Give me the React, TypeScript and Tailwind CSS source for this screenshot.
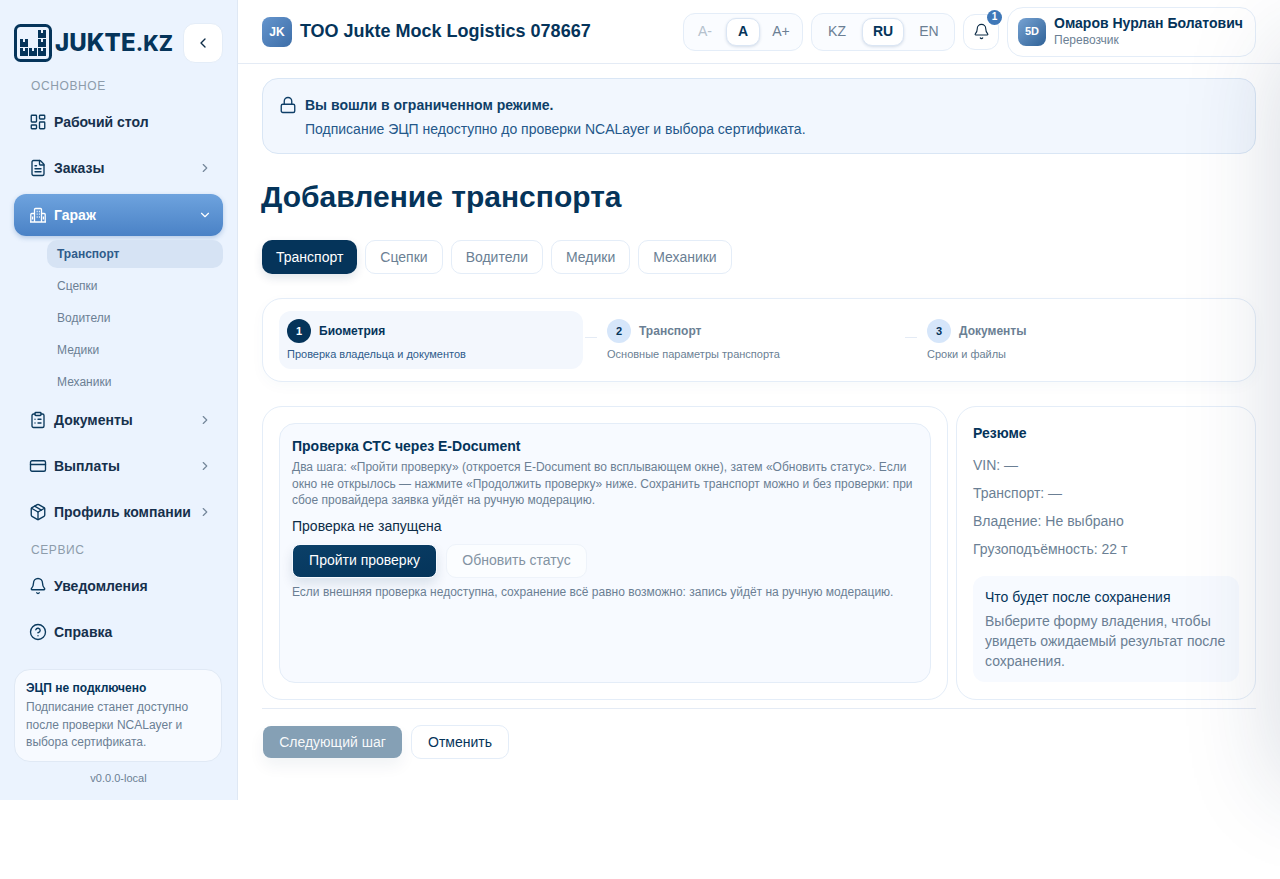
import {
  Bell,
  ChevronDown,
  ChevronLeft,
  ChevronRight,
  CircleHelp,
  ClipboardList,
  CreditCard,
  FileText,
  LayoutDashboard,
  Lock,
  Package,
} from "lucide-react";
import type { ReactNode } from "react";

const GarageIcon = () => (
  <svg width="18" height="18" viewBox="0 0 18 18" fill="none" stroke="currentColor" strokeWidth="1.3" strokeLinejoin="round">
    <path d="M5.500 16V3.500a1 1 0 0 1 1-1h5a1 1 0 0 1 1 1V16" />
    <path d="M5.500 7.500H2.800a1 1 0 0 0-1 1V16M12.500 7.500h2.700a1 1 0 0 1 1 1V16M1 16h16" />
    <path d="M7.700 5.500h.9M9.900 5.500h.9M7.700 8.200h.9M9.900 8.200h.9M7.700 11h.9M9.900 11h.9M3.600 10.500v3M14.400 10.500v3" />
  </svg>
);

// cargo boxes of the logo, each one with a notch on top
const logoBoxes = [
  [6, 15],
  [6, 24],
  [15, 24],
  [24, 24],
  [24, 15],
  [24, 6],
];

const Logo = () => (
  <svg width="38" height="38" viewBox="0 0 38 38" fill="none" className="shrink-0">
    <rect x="1.500" y="1.500" width="35" height="35" rx="5" stroke="#05345a" strokeWidth="3" />
    {logoBoxes.map(([x, y]) => (
      <path key={`${x}-${y}`} d={`M${x} ${y}h3v3h2v-3h3v8h-8z`} fill="#05345a" />
    ))}
  </svg>
);

const NavItem = ({
  icon,
  label,
  chevron,
  active,
}: {
  icon: ReactNode;
  label: string;
  chevron?: "right" | "down";
  active?: boolean;
}) => (
  <div
    className={
      active
        ? "mt-[1px] flex h-[42px] items-center gap-[7px] rounded-[12px] bg-gradient-to-b from-[#6ea3de] to-[#4a82c6] pr-[11px] pl-[14px] text-white shadow-[0_2px_5px_rgba(53,107,172,0.3)]"
        : "flex h-[42px] items-center gap-[7px] rounded-[12px] pr-[11px] pl-[14px] text-[#16304c]"
    }
  >
    <span className={active ? "flex w-[19px] justify-center text-white" : "flex w-[19px] justify-center text-[#0b3a5e]"}>{icon}</span>
    <span className="flex-1 text-[14px] font-bold">{label}</span>
    {chevron === "right" && <ChevronRight size={14} className="text-[#75879b]" />}
    {chevron === "down" && <ChevronDown size={14} className="text-white" />}
  </div>
);

const SubItem = ({ label, active }: { label: string; active?: boolean }) => (
  <div
    className={
      active
        ? "flex h-[28px] items-center rounded-[10px] bg-[#d6e3f4] pl-[10px] text-[12px] font-bold text-[#2f5c8b]"
        : "flex h-[28px] items-center pl-[10px] text-[12px] text-[#6b7f94]"
    }
  >
    {label}
  </div>
);

const Sidebar = () => (
  <aside className="flex h-[800px] w-[238px] shrink-0 flex-col border-r border-[#dfe8f4] bg-[#ebf3fe] px-[14px] pt-[23px]">
    <div className="flex h-[40px] items-center justify-between">
      <div className="flex items-center gap-[3px]">
        <Logo />
        <span className="font-['Inter',sans-serif] text-[24px] leading-none font-extrabold tracking-[0.1px] text-[#05345a]">
          JUKTE<span className="text-[21px]">.KZ</span>
        </span>
      </div>
      <button className="flex h-[40px] w-[40px] shrink-0 items-center justify-center rounded-[12px] border border-[#e4edf8] bg-white text-[#0d2c47]">
        <ChevronLeft size={16} />
      </button>
    </div>
    <div className="mt-[16px] pl-[17px] text-[12px] leading-[14px] tracking-[0.6px] text-[#8d9cab]">ОСНОВНОЕ</div>
    <nav className="mt-[8px] flex flex-col gap-[4px]">
      <NavItem icon={<LayoutDashboard size={18} strokeWidth={1.8} />} label="Рабочий стол" />
      <NavItem icon={<FileText size={18} strokeWidth={1.8} />} label="Заказы" chevron="right" />
      <NavItem icon={<GarageIcon />} label="Гараж" chevron="down" active />
      <div className="ml-[33px] -mb-[1px] flex flex-col gap-[4px]">
        <SubItem label="Транспорт" active />
        <SubItem label="Сцепки" />
        <SubItem label="Водители" />
        <SubItem label="Медики" />
        <SubItem label="Механики" />
      </div>
      <NavItem icon={<ClipboardList size={18} strokeWidth={1.8} />} label="Документы" chevron="right" />
      <NavItem icon={<CreditCard size={18} strokeWidth={1.8} />} label="Выплаты" chevron="right" />
      <NavItem icon={<Package size={18} strokeWidth={1.8} />} label="Профиль компании" chevron="right" />
    </nav>
    <div className="mt-[10px] pl-[17px] text-[12px] leading-[14px] tracking-[0.6px] text-[#8d9cab]">СЕРВИС</div>
    <div className="mt-[8px] flex flex-col gap-[4px]">
      <NavItem icon={<Bell size={18} strokeWidth={1.8} />} label="Уведомления" />
      <NavItem icon={<CircleHelp size={18} strokeWidth={1.8} />} label="Справка" />
    </div>
    <div className="mt-[16px] mr-[1px] h-[93px] rounded-[16px] border border-[#e0e9f5] bg-[#f7faff] px-[11px] pt-[10px]">
      <div className="text-[12px] leading-[16px] font-bold text-[#05345a]">ЭЦП не подключено</div>
      <div className="mt-[3px] text-[12px] leading-[17.500px] text-[#6b7f94]">
        Подписание станет доступно после проверки NCALayer и выбора сертификата.
      </div>
    </div>
    <div className="mt-[9px] text-center text-[11px] leading-[14px] text-[#6b7f94]">v0.0.0-local</div>
  </aside>
);

const Segment = ({ items, active, muted, wide }: { items: string[]; active: string; muted?: string; wide?: boolean }) => (
  <div className="flex h-[38px] items-center gap-[4px] rounded-[12px] border border-[#e4edf8] bg-[#fafcff] px-[4px]">
    {items.map((item) => {
      const width = wide ? "w-[42px]" : "w-[34px]";
      if (item === active) {
        return (
          <div
            key={item}
            className={`${width} flex h-[28px] items-center justify-center rounded-[10px] border border-[#dbe6f4] bg-white text-[14px] font-bold text-[#05345a] shadow-[0_1px_3px_rgba(40,80,130,0.18)]`}
          >
            {item}
          </div>
        );
      }
      return (
        <div
          key={item}
          className={`${width} flex h-[28px] items-center justify-center text-[14px] ${item === muted ? "text-[#b5c1cd]" : "text-[#6b7f94]"}`}
        >
          {item}
        </div>
      );
    })}
  </div>
);

const Header = () => (
  <header className="flex h-[64px] items-center justify-between border-b border-[#e4ebf5] px-[24px]">
    <div className="flex items-center gap-[8px]">
      <div className="flex h-[30px] w-[30px] items-center justify-center rounded-[8px] bg-gradient-to-br from-[#6595cd] to-[#3d6ea8] text-[12px] font-bold text-white">
        JK
      </div>
      <div className="text-[18px] font-bold text-[#05345a]">ТОО Jukte Mock Logistics 078667</div>
    </div>
    <div className="flex items-center gap-[8px]">
      <Segment items={["A-", "A", "A+"]} active="A" muted="A-" />
      <Segment items={["KZ", "RU", "EN"]} active="RU" wide />
      <div className="relative flex h-[36px] w-[36px] items-center justify-center rounded-[12px] border border-[#e4edf8] bg-white text-[#0d2c47]">
        <Bell size={17} strokeWidth={1.6} />
        <span className="absolute -top-[5px] -right-[4px] flex h-[15px] w-[15px] items-center justify-center rounded-full bg-[#3f78b8] text-[10px] leading-none font-bold text-white">
          1
        </span>
      </div>
      <div className="flex h-[50px] w-[249px] items-center gap-[8px] rounded-[16px] border border-[#e4edf8] bg-white pl-[10px]">
        <div className="flex h-[28px] w-[28px] items-center justify-center rounded-[8px] bg-gradient-to-br from-[#77a3d3] to-[#2f6297] text-[11px] font-bold text-white">
          5D
        </div>
        <div className="-mt-[1px]">
          <div className="text-[14px] leading-[17px] font-bold text-[#05345a]">Омаров Нурлан Болатович</div>
          <div className="text-[12px] leading-[16px] text-[#6b7f94]">Перевозчик</div>
        </div>
      </div>
    </div>
  </header>
);

const Tab = ({ label, active }: { label: string; active?: boolean }) => (
  <div
    className={
      active
        ? "flex h-[34px] items-center rounded-[10px] bg-[#05345a] px-[14px] text-[14px] text-white shadow-[0_4px_10px_rgba(5,52,90,0.12)]"
        : "flex h-[34px] items-center rounded-[10px] border border-[#e4edf8] bg-white px-[14px] text-[14px] text-[#6b7f94]"
    }
  >
    {label}
  </div>
);

const Step = ({ n, title, sub, active }: { n: string; title: string; sub: string; active?: boolean }) => (
  <div className={active ? "h-[58px] w-[304px] rounded-[12px] bg-[#f3f7fd] px-[8px] pt-[8px]" : "h-[58px] w-[304px] px-[8px] pt-[8px]"}>
    <div className="flex items-center gap-[8px]">
      <div
        className={
          active
            ? "flex h-[24px] w-[24px] items-center justify-center rounded-full bg-[#05345a] text-[11px] font-bold text-white"
            : "flex h-[24px] w-[24px] items-center justify-center rounded-full bg-[#d6e6fa] text-[11px] font-bold text-[#05345a]"
        }
      >
        {n}
      </div>
      <div className={active ? "text-[12px] font-bold text-[#05345a]" : "text-[12px] font-bold text-[#6b7f94]"}>{title}</div>
    </div>
    <div className={active ? "mt-[4px] text-[11px] leading-[14px] text-[#2f5c8b]" : "mt-[4px] text-[11px] leading-[14px] text-[#6b7f94]"}>{sub}</div>
  </div>
);

const Connector = () => <div className="mx-[2px] mb-[6px] h-[1px] w-[12px] bg-[#e4ebf5]" />;

const Content = () => (
  <main className="px-[24px] pt-[14px]">
    <div className="h-[76px] rounded-[16px] border border-[#d9e6f5] bg-[#f2f7fe] pt-[16px] pl-[16px]">
      <div className="flex items-center gap-[8px]">
        <Lock size={18} strokeWidth={1.8} className="text-[#0f3f68]" />
        <div className="text-[14px] leading-[20px] font-bold text-[#0f3f68]">Вы вошли в ограниченном режиме.</div>
      </div>
      <div className="mt-[4px] pl-[26px] text-[14px] leading-[20px] text-[#24588a]">
        Подписание ЭЦП недоступно до проверки NCALayer и выбора сертификата.
      </div>
    </div>

    <h1 className="mt-[25px] -ml-[1px] text-[30px] leading-[36px] font-bold text-[#05345a]">Добавление транспорта</h1>

    <div className="mt-[25px] flex gap-[8px]">
      <Tab label="Транспорт" active />
      <Tab label="Сцепки" />
      <Tab label="Водители" />
      <Tab label="Медики" />
      <Tab label="Механики" />
    </div>

    <div className="mt-[24px] flex h-[84px] items-center rounded-[20px] border border-[#e4edf8] bg-white px-[16px] shadow-[0_4px_14px_rgba(40,80,130,0.03)]">
      <Step n="1" title="Биометрия" sub="Проверка владельца и документов" active />
      <Connector />
      <Step n="2" title="Транспорт" sub="Основные параметры транспорта" />
      <Connector />
      <Step n="3" title="Документы" sub="Сроки и файлы" />
    </div>

    <div className="mt-[24px] flex h-[294px] gap-[8px]">
      <section className="flex-1 rounded-[20px] border border-[#e4edf8] bg-white p-[16px]">
        <div className="h-full rounded-[16px] border border-[#e4edf8] bg-[#f7faff] px-[12px] pt-[12px]">
          <div className="text-[14px] leading-[20px] font-bold text-[#05345a]">Проверка СТС через E-Document</div>
          <p className="mt-[3px] text-[12px] leading-[16.500px] text-[#6b7f94]">
            Два шага: «Пройти проверку» (откроется E-Document во всплывающем окне), затем «Обновить статус». Если окно не
            открылось — нажмите «Продолжить проверку» ниже. Сохранить транспорт можно и без проверки: при сбое провайдера
            заявка уйдёт на ручную модерацию.
          </p>
          <div className="mt-[7px] text-[14px] leading-[20px] text-[#0d2c47]">Проверка не запущена</div>
          <div className="mt-[8px] flex gap-[9px]">
            <button className="h-[34px] w-[145px] rounded-[8px] border border-[#f7faff] bg-gradient-to-br from-[#0b4068] to-[#05345a] text-[14px] text-white shadow-[0_6px_12px_rgba(5,52,90,0.12)]">
              Пройти проверку
            </button>
            <button className="h-[34px] w-[141px] rounded-[10px] border border-[#eef3fa] bg-[#fbfdff] text-[14px] text-[#8393a3]">
              Обновить статус
            </button>
          </div>
          <p className="mt-[6px] text-[12px] leading-[16px] text-[#6b7f94]">
            Если внешняя проверка недоступна, сохранение всё равно возможно: запись уйдёт на ручную модерацию.
          </p>
        </div>
      </section>
      <section className="w-[300px] shrink-0 rounded-[20px] border border-[#e4edf8] bg-white px-[16px] pt-[16px]">
        <div className="text-[14px] leading-[20px] font-bold text-[#05345a]">Резюме</div>
        <div className="mt-[12px] flex flex-col gap-[8px] text-[14px] leading-[20px] text-[#6b7f94]">
          <div>VIN: —</div>
          <div>Транспорт: —</div>
          <div>Владение: Не выбрано</div>
          <div>Грузоподъёмность: 22 т</div>
        </div>
        <div className="mt-[17px] h-[106px] rounded-[12px] bg-[#f7faff] px-[12px] pt-[11px]">
          <div className="text-[14px] leading-[20px] text-[#05345a]">Что будет после сохранения</div>
          <div className="mt-[4px] text-[14px] leading-[20px] text-[#6b7f94]">
            Выберите форму владения, чтобы увидеть ожидаемый результат после сохранения.
          </div>
        </div>
      </section>
    </div>

    <div className="mt-[8px] flex items-center gap-[9px] border-t border-[#e4ebf5] pt-[16px]">
      <button className="ml-[1px] h-[32px] w-[139px] rounded-[8px] bg-[#85a0b5] text-[14px] text-white/95 shadow-[0_8px_16px_rgba(5,52,90,0.06)]">
        Следующий шаг
      </button>
      <button className="h-[34px] w-[98px] rounded-[10px] border border-[#e4edf8] bg-white text-[14px] text-[#05345a]">Отменить</button>
    </div>
  </main>
);

export default function App() {
  return (
    <div className="relative h-[879px] w-[1280px] overflow-hidden bg-white font-['Liberation_Sans',Arial,sans-serif]">
      <div className="flex h-[800px]">
        <Sidebar />
        <div className="min-w-0 flex-1">
          <Header />
          <Content />
        </div>
      </div>
      {/* off-canvas drawer shadow coming in from the right edge */}
      <div className="absolute top-[45px] left-[1280px] h-[740px] w-[300px] shadow-[0_0_90px_rgba(30,50,90,0.18)]" />
    </div>
  );
}
